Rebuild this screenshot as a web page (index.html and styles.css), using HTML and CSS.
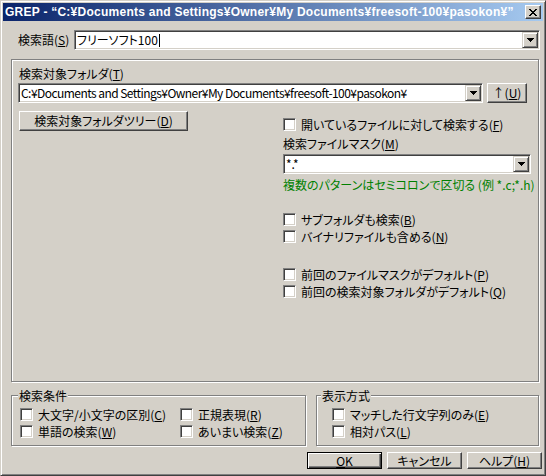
FILE: index.html
```html
<!DOCTYPE html>
<html lang="ja">
<head>
<meta charset="utf-8">
<title>GREP</title>
<link rel="stylesheet" href="styles.css">
</head>
<body>
<div class="window">
  <div class="titlebar">
    <span class="title">GREP - “C:¥Documents and Settings¥Owner¥My Documents¥freesoft-100¥pasokon¥”</span>
    <span class="close-btn"><svg width="8" height="7" viewBox="0 0 8 7"><path d="M0 0h2v1H0zM6 0h2v1H6zM1 1h2v1H1zM5 1h2v1H5zM2 2h4v1H2zM3 3h2v1H3zM2 4h4v1H2zM1 5h2v1H1zM5 5h2v1H5zM0 6h2v1H0zM6 6h2v1H6z"/></svg></span>
  </div>
  <div class="dialog">
    <div class="search-row">
      <span class="search-label">検索語(<u>S</u>)</span>
      <div class="combo search-combo">
        <span class="combo-text">フリーソフト100<span class="caret"></span></span>
        <span class="drop"><svg width="7" height="4" viewBox="0 0 7 4"><path d="M0 0h7v1H0zM1 1h5v1H1zM2 2h3v1H2zM3 3h1v1H3z"/></svg></span>
      </div>
    </div>

    <div class="frame etched">
      <div class="folder-label">検索対象フォルダ(<u>T</u>)</div>
      <div class="folder-row">
        <div class="combo folder-combo">
          <span class="combo-text path-text">C:¥Documents and Settings¥Owner¥My Documents¥freesoft-100¥pasokon¥</span>
          <span class="drop"><svg width="7" height="4" viewBox="0 0 7 4"><path d="M0 0h7v1H0zM1 1h5v1H1zM2 2h3v1H2zM3 3h1v1H3z"/></svg></span>
        </div>
        <button class="btn up-btn">↑(<u>U</u>)</button>
      </div>
      <div class="columns">
        <div class="col-left">
          <button class="btn tree-btn">検索対象フォルダツリー(<u>D</u>)</button>
        </div>
        <div class="col-right">
          <div class="check open-check"><span class="box"></span><span>開いているファイルに対して検索する(<u>F</u>)</span></div>
          <div class="mask-label">検索ファイルマスク(<u>M</u>)</div>
          <div class="combo mask-combo">
            <span class="combo-text">*.*</span>
            <span class="drop"><svg width="7" height="4" viewBox="0 0 7 4"><path d="M0 0h7v1H0zM1 1h5v1H1zM2 2h3v1H2zM3 3h1v1H3z"/></svg></span>
          </div>
          <div class="hint">複数のパターンはセミコロンで区切る (例 *.c;*.h)</div>
          <div class="check-list sub-opts">
            <div class="check"><span class="box"></span><span>サブフォルダも検索(<u>B</u>)</span></div>
            <div class="check"><span class="box"></span><span>バイナリファイルも含める(<u>N</u>)</span></div>
          </div>
          <div class="check-list default-opts">
            <div class="check"><span class="box"></span><span>前回のファイルマスクがデフォルト(<u>P</u>)</span></div>
            <div class="check"><span class="box"></span><span>前回の検索対象フォルダがデフォルト(<u>Q</u>)</span></div>
          </div>
        </div>
      </div>
    </div>

    <div class="groups">
      <div class="group etched cond-group">
        <div class="group-title">検索条件</div>
        <div class="cond-grid">
          <div class="check"><span class="box"></span><span>大文字/小文字の区別(<u>C</u>)</span></div>
          <div class="check"><span class="box"></span><span>正規表現(<u>R</u>)</span></div>
          <div class="check"><span class="box"></span><span>単語の検索(<u>W</u>)</span></div>
          <div class="check"><span class="box"></span><span>あいまい検索(<u>Z</u>)</span></div>
        </div>
      </div>
      <div class="group etched view-group">
        <div class="group-title">表示方式</div>
        <div class="view-list">
          <div class="check"><span class="box"></span><span>マッチした行文字列のみ(<u>E</u>)</span></div>
          <div class="check"><span class="box"></span><span>相対パス(<u>L</u>)</span></div>
        </div>
      </div>
    </div>

    <div class="buttons">
      <button class="btn dlg-btn default"><u>O</u>K</button>
      <button class="btn dlg-btn">キャンセル</button>
      <button class="btn dlg-btn">ヘルプ(<u>H</u>)</button>
    </div>
  </div>
</div>
</body>
</html>
```

FILE: styles.css
```css
* { box-sizing: border-box; }

html, body {
  margin: 0;
  padding: 0;
}

body {
  width: 546px;
  height: 476px;
  background: #d4d0c8;
  font-family: "Noto Sans CJK JP", "Noto Sans", sans-serif;
  font-size: 12px;
  line-height: 14px;
  color: #000;
  font-feature-settings: "palt";
  overflow: hidden;
}

u {
  text-decoration: underline;
  text-underline-offset: 1px;
}

.window {
  width: 546px;
  height: 476px;
  display: flex;
  flex-direction: column;
  background: #d4d0c8;
  border: 1px solid;
  border-color: #d4d0c8 #404040 #404040 #d4d0c8;
  box-shadow: inset 1px 1px 0 #fff, inset -1px -1px 0 #808080;
  padding: 2px;
}

/* title bar */
.titlebar {
  height: 18px;
  flex: none;
  display: flex;
  align-items: center;
  padding-left: 2px;
  background: linear-gradient(to right, #0a246a, #a6caf0);
  color: #fff;
  font-family: "Liberation Sans", Arial, sans-serif;
  font-weight: bold;
  font-size: 12px;
  letter-spacing: 0.25px;
  font-feature-settings: normal;
}

.title {
  flex: 1;
  white-space: nowrap;
  overflow: hidden;
}

.close-btn {
  width: 16px;
  height: 14px;
  flex: none;
  margin: 0 2px 0 4px;
  display: flex;
  align-items: center;
  justify-content: center;
  background: #d4d0c8;
  border: 1px solid;
  border-color: #fff #404040 #404040 #fff;
  box-shadow: inset -1px -1px 0 #808080;
}

.close-btn svg, .drop svg { display: block; shape-rendering: crispEdges; }

/* dialog body */
.dialog {
  flex: 1;
  padding: 9px 3px 0 8px;
}

.search-row {
  display: flex;
  align-items: center;
  height: 20px;
  padding-left: 7px;
}

.search-label {
  width: 56px;
  flex: none;
}

.search-combo { flex: 1; }

/* combo box */
.combo {
  display: flex;
  height: 20px;
  background: #fff;
  border: 1px solid;
  border-color: #808080 #fff #fff #808080;
  box-shadow: inset 1px 1px 0 #404040, inset -1px -1px 0 #d4d0c8;
  padding: 1px;
}

.combo-text {
  flex: 1;
  min-width: 0;
  padding-left: 1px;
  display: flex;
  align-items: center;
  white-space: nowrap;
  overflow: hidden;
}

.path-text { letter-spacing: -0.55px; }

.caret {
  display: inline-block;
  width: 1px;
  height: 13px;
  background: #000;
  margin-left: 1px;
}

.drop {
  width: 16px;
  height: 16px;
  flex: none;
  display: flex;
  align-items: center;
  justify-content: center;
  background: #d4d0c8;
  border: 1px solid;
  border-color: #d4d0c8 #404040 #404040 #d4d0c8;
  box-shadow: inset 1px 1px 0 #fff, inset -1px -1px 0 #808080;
}

/* buttons */
.btn {
  font: inherit;
  color: #000;
  background: #d4d0c8;
  border: 1px solid;
  border-color: #fff #404040 #404040 #fff;
  box-shadow: inset -1px -1px 0 #808080;
  padding: 0;
  height: 20px;
  display: flex;
  align-items: center;
  justify-content: center;
  white-space: nowrap;
}

.btn.default {
  border-color: #000;
  box-shadow: inset 1px 1px 0 #fff, inset -1px -1px 0 #404040, inset -2px -2px 0 #808080;
}

/* etched frames */
.etched {
  border: 1px solid #808080;
  box-shadow: inset 1px 1px 0 #fff, 1px 1px 0 #fff;
}

.frame {
  margin: 9px 1px 0 0;
  height: 323px;
  padding: 7px 0 0 6px;
}

.folder-label { margin-left: 1px; }

.folder-row {
  display: flex;
  gap: 4px;
  margin-top: 2px;
}

.folder-combo { width: 465px; }

.up-btn { width: 40px; }

.columns {
  display: grid;
  grid-template-columns: 265px 248px;
  margin-top: 8px;
}

.tree-btn {
  width: 169px;
  margin-left: 1px;
}

/* checkboxes */
.check {
  display: flex;
  align-items: center;
  gap: 5px;
  height: 17px;
  white-space: nowrap;
}

.box {
  width: 13px;
  height: 13px;
  flex: none;
  background: #fff;
  border: 1px solid;
  border-color: #808080 #fff #fff #808080;
  box-shadow: inset 1px 1px 0 #404040, inset -1px -1px 0 #d4d0c8;
}

.open-check { margin-top: 5px; }

.mask-label { margin-top: 4px; }

.mask-combo { margin-top: 3px; }

.hint {
  margin-top: 4px;
  color: #008000;
  white-space: nowrap;
}

.sub-opts { margin-top: 19px; }

.default-opts { margin-top: 21px; }

/* bottom groups */
.groups {
  display: flex;
  gap: 10px;
  margin: 13px 1px 0 0;
}

.group {
  height: 51px;
}

.cond-group {
  width: 295px;
  padding-left: 6px;
}

.view-group {
  flex: 1;
  padding-left: 4px;
}

.group-title {
  width: fit-content;
  margin-top: -7px;
  padding: 0 1px;
  background: #d4d0c8;
}

.cond-grid {
  display: grid;
  grid-template-columns: 160px auto;
  margin: 3px 0 0 2px;
}

.view-list {
  margin: 3px 0 0 11px;
}

.buttons {
  display: flex;
  justify-content: flex-end;
  gap: 5px;
  margin: 6px -2px 0 0;
}

.dlg-btn {
  width: 75px;
  height: 17px;
}
```
